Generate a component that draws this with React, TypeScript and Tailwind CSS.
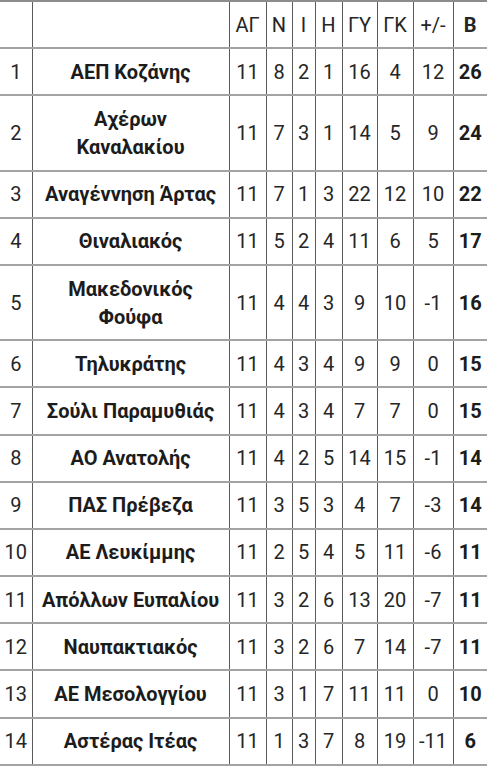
const headers = ['ΑΓ', 'Ν', 'Ι', 'Η', 'ΓΥ', 'ΓΚ', '+/-'];

const widths = ['w-[32px]', 'w-[197px]', 'w-[37px]', 'w-[26px]', 'w-[23px]', 'w-[27px]', 'w-[35px]', 'w-[36px]', 'w-[40px]', 'w-[34px]'];

// θέση, ομάδα, αγώνες, νίκες, ισοπαλίες, ήττες, γκολ υπέρ, γκολ κατά, διαφορά, βαθμοί
const rows: [number, string, number, number, number, number, number, number, number, number][] = [
  [1, 'ΑΕΠ Κοζάνης', 11, 8, 2, 1, 16, 4, 12, 26],
  [2, 'Αχέρων\nΚαναλακίου', 11, 7, 3, 1, 14, 5, 9, 24],
  [3, 'Αναγέννηση Άρτας', 11, 7, 1, 3, 22, 12, 10, 22],
  [4, 'Θιναλιακός', 11, 5, 2, 4, 11, 6, 5, 17],
  [5, 'Μακεδονικός\nΦούφα', 11, 4, 4, 3, 9, 10, -1, 16],
  [6, 'Τηλυκράτης', 11, 4, 3, 4, 9, 9, 0, 15],
  [7, 'Σούλι Παραμυθιάς', 11, 4, 3, 4, 7, 7, 0, 15],
  [8, 'ΑΟ Ανατολής', 11, 4, 2, 5, 14, 15, -1, 14],
  [9, 'ΠΑΣ Πρέβεζα', 11, 3, 5, 3, 4, 7, -3, 14],
  [10, 'ΑΕ Λευκίμμης', 11, 2, 5, 4, 5, 11, -6, 11],
  [11, 'Απόλλων Ευπαλίου', 11, 3, 2, 6, 13, 20, -7, 11],
  [12, 'Ναυπακτιακός', 11, 3, 2, 6, 7, 14, -7, 11],
  [13, 'ΑΕ Μεσολογγίου', 11, 3, 1, 7, 11, 11, 0, 10],
  [14, 'Αστέρας Ιτέας', 11, 1, 3, 7, 8, 19, -11, 6],
];

const cell = 'border-r border-r-[#5a5a5a] last:border-r-0 border-b-2 border-b-[#a3a3a3] py-[8.6px] leading-[28px] text-center align-middle';

export default function App() {
  return (
    <div className="w-[487px] h-[768px] bg-white overflow-hidden" style={{ fontFamily: 'Roboto, "Noto Sans", sans-serif' }}>
      <table className="table-fixed border-collapse w-[487px] text-[20px] text-[#262626] border-t-2 border-t-[#8c8c8c]">
        <colgroup>
          {widths.map((w, i) => (
            <col key={i} className={w} />
          ))}
        </colgroup>
        <thead>
          <tr>
            <th className={`${cell} font-normal`}></th>
            <th className={`${cell} font-normal`}></th>
            {headers.map((h) => (
              <th key={h} className={`${cell} font-normal`}>
                {h}
              </th>
            ))}
            <th className={`${cell} font-bold`}>Β</th>
          </tr>
        </thead>
        <tbody>
          {rows.map((r) => (
            <tr key={r[0]}>
              <td className={cell}>{r[0]}</td>
              <td className={`${cell} font-bold px-1 whitespace-pre-line text-[#1c1c1c]`}>{r[1]}</td>
              {r.slice(2, 9).map((v, i) => (
                <td key={i} className={`${cell} whitespace-nowrap`}>
                  {v}
                </td>
              ))}
              <td className={`${cell} font-bold text-[#1c1c1c]`}>{r[9]}</td>
            </tr>
          ))}
        </tbody>
      </table>
    </div>
  );
}
